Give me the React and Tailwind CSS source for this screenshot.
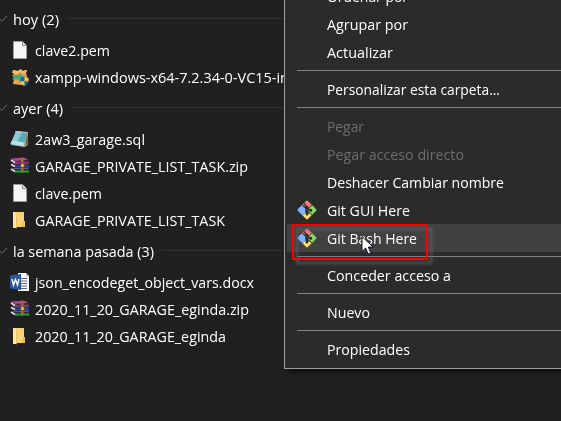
import { useLayoutEffect, useRef } from "react";

// Text squeezed horizontally to a given width.
function Label({ children, width }) {
  const ref = useRef(null);
  useLayoutEffect(() => {
    const el = ref.current;
    el.style.transform = "none";
    const natural = el.getBoundingClientRect().width;
    if (natural) el.style.transform = `scaleX(${width / natural})`;
  }, [width, children]);
  return (
    <span ref={ref} className="inline-block origin-left whitespace-pre">
      {children}
    </span>
  );
}

function FileIcon() {
  return (
    <svg width="20" height="20" viewBox="0 0 20 20">
      <path d="M3.5 1.5h9l4 4v13h-13z" fill="#f5f7f7" stroke="#9b9b9b" />
      <path d="M12.5 1.5v4h4" fill="#e2e5e7" stroke="#8b8b8b" />
    </svg>
  );
}

function FolderIcon() {
  return (
    <svg width="20" height="20" viewBox="0 0 20 20">
      <path d="M3 2h11v9h1v6H6.500L6 18H3z" fill="#f7d377" />
      <path d="M13 11h2v6h-3v-4z" fill="#eabf5c" />
      <path d="M3 2l3.500 1.500V18.500L4 17.500l-1-1z" fill="#ffe7a0" />
      <path d="M6.500 4v14" stroke="#dfb354" strokeWidth=".7" />
    </svg>
  );
}

function SetupIcon() {
  return (
    <svg width="20" height="20" viewBox="0 0 20 20">
      <path d="M3 3l5 1 3-2 1 2 5-1-1 3 1 4v7l-6 1-8-1 1-5z" fill="#e9a74c" />
      <path d="M3 3l5 1 3-2 1 2 5-1-1 3-5-1-4 2-5-1z" fill="#f3bd6a" />
      <path d="M2 8h7V5.500l6 5-6 4.500v-2.500H2l1.500-2z" fill="#41aa80" />
      <path d="M14.500 9.500l4 1.500v3.500c0 2-2 3.500-4 4.500-2-1-4-2.500-4-4.500V11z" fill="#1c5fae" />
      <path d="M14.500 9.500l4 1.500v3.200h-4zM10.500 14.200h4V19c-2-1-4-2.500-4-4.500z" fill="#f6cb33" />
    </svg>
  );
}

function SqlIcon() {
  return (
    <svg width="20" height="20" viewBox="0 0 20 20">
      <path d="M6 2l12 1v13l-3 2-14-2z" fill="#a99f74" />
      <path d="M17 4l1.500 10-3 3.500z" fill="#6a6350" />
      <path d="M6 2.500l11 1-3.500 14L.5 15z" fill="#58a9bb" />
      <path d="M6 2.500l6 .5L6 16 .5 15z" fill="#8ecbd6" />
      <path d="M2 11.500l12.500 2-1 4L.5 15z" fill="#b9e0e6" />
      <path d="M5.500 2.500l11 1" stroke="#eef4ed" strokeDasharray="1 1" />
    </svg>
  );
}

function ZipIcon() {
  return (
    <svg width="20" height="20" viewBox="0 0 20 20">
      <path d="M0 3l4-1 11-.5 4.500 3V17L5 17.500l-4-3z" fill="#29202b" />
      <path d="M1 2.500l13-1 4.500 2.500L5 5z" fill="#b04590" />
      <path d="M5 5.500h14V7H5z" fill="#8e2b75" />
      <path d="M5 9.500h14v2H5z" fill="#2b3fe0" />
      <path d="M5 14.500h14v2H5z" fill="#12a82c" />
      <path d="M3 7.800h15.500M3 12.700h15.500" stroke="#6f6b74" />
      <path d="M1 4l4 2.500M1 8.500l4 2M1 13l4 2.500" stroke="#e9dfe8" strokeWidth="1.500" />
      <path d="M11 1.500l2.500.5v14.500H11z" fill="#9a6d2b" />
      <path d="M10.500 7.500h4v4h-4z" fill="#c99b4b" stroke="#5c3d14" strokeWidth=".7" />
      <path d="M12.500 8.500v2" stroke="#f3e3ae" />
    </svg>
  );
}

function WordIcon() {
  return (
    <svg width="20" height="20" viewBox="0 0 20 20">
      <path d="M8 1h8l3 3v15H8z" fill="#fff" />
      <path d="M16 1v3h3z" fill="#a9b4c2" />
      <path d="M11 6.500h6M11 9h6M11 11.500h6M11 14h6M11 16.500h6" stroke="#58697f" />
      <path d="M0 3.500L11 2v16L0 16.500z" fill="#2b579a" />
      <path d="M2 7l1.500 6L5.500 7.500 7.500 13 9 7" stroke="#fff" strokeWidth="1.400" fill="none" />
    </svg>
  );
}

function GitIcon() {
  return (
    <svg width="20" height="20" viewBox="0 0 20 20">
      <path d="M10 0L20 10 10 20 0 10z" fill="#3a3432" />
      <path d="M5.200 4.700L9.200.9q.8-.7 1.600 0l4 3.900L11.500 8 8.700 6.800z" fill="#f47b78" />
      <path d="M4.700 5.200L8.300 8.800v4.400L5 15 .8 10.800q-.7-.8 0-1.600z" fill="#80b3ff" />
      <path d="M15.300 5.200l3.900 4q.7.800 0 1.600l-4 4L11.700 11.500V8.700z" fill="#87d762" />
      <path d="M5.300 15.200L8.500 13h3l3.200 2.200-3.900 3.900q-.8.700-1.600 0z" fill="#ffe169" />
      <g stroke="#302c2a" strokeWidth="1.200" fill="#302c2a">
        <path d="M7 3.500l3 3.500v7M10 7.500l3.500 3" fill="none" />
        <circle cx="10" cy="7.300" r=".9" />
        <circle cx="13.700" cy="10.300" r=".9" />
        <circle cx="10" cy="14" r=".9" />
      </g>
    </svg>
  );
}

const groups = [
  {
    name: "hoy (2)", width: 46,
    files: [
      { icon: FileIcon, name: "clave2.pem", width: 75 },
      { icon: SetupIcon, name: "xampp-windows-x64-7.2.34-0-VC15-in", width: 254 },
    ],
  },
  {
    name: "ayer (4)", width: 50,
    files: [
      { icon: SqlIcon, name: "2aw3_garage.sql", width: 110 },
      { icon: ZipIcon, name: "GARAGE_PRIVATE_LIST_TASK.zip", width: 213 },
      { icon: FileIcon, name: "clave.pem", width: 67 },
      { icon: FolderIcon, name: "GARAGE_PRIVATE_LIST_TASK", width: 190 },
    ],
  },
  {
    name: "la semana pasada (3)", width: 141,
    files: [
      { icon: WordIcon, name: "json_encodeget_object_vars.docx", width: 219 },
      { icon: ZipIcon, name: "2020_11_20_GARAGE_eginda.zip", width: 214 },
      { icon: FolderIcon, name: "2020_11_20_GARAGE_eginda", width: 191 },
    ],
  },
];

const menu = [
  { name: "Ordenar por", width: 81 },
  { name: "Agrupar por", width: 81 },
  { name: "Actualizar", width: 66 },
  null,
  { name: "Personalizar esta carpeta...", width: 173 },
  null,
  { name: "Pegar", width: 37 },
  { name: "Pegar acceso directo", width: 137 },
  { name: "Deshacer Cambiar nombre", width: 177 },
  { name: "Git GUI Here", width: 83, icon: true },
  { name: "Git Bash Here", width: 90, icon: true, active: true },
  null,
  { name: "Conceder acceso a", width: 124 },
  null,
  { name: "Nuevo", width: 43 },
  null,
  { name: "Propiedades", width: 83 },
].map((m) => (m && m.name.startsWith("Pegar") ? { ...m, disabled: true } : m));

function Group({ group }) {
  return (
    <section>
      <div className="flex h-[35px] items-center">
        <svg width="8" height="8" viewBox="0 0 8 8" className="mr-[5px] shrink-0">
          <path d="M-1 3.500L1.800 6.300 7 1" fill="none" stroke="#6c6c6c" />
        </svg>
        <div className="shrink-0" style={{ width: group.width + 8 }}>
          <Label width={group.width}>{group.name}</Label>
        </div>
        <div className="h-px flex-1 bg-[#303030]" />
      </div>
      {group.files.map(({ icon: Icon, name, width }) => (
        <div key={name} className="flex h-[27px] items-center pl-[10px]">
          <div className="mr-[5px] shrink-0">
            <Icon />
          </div>
          <Label width={width}>{name}</Label>
        </div>
      ))}
    </section>
  );
}

export default function App() {
  return (
    <div className="relative h-[421px] w-[561px] overflow-hidden bg-[#202020] font-['Open_Sans',sans-serif] text-[15px] leading-5 text-white">
      <main className="w-[284px] overflow-hidden pt-px">
        {groups.map((g) => (
          <Group key={g.name} group={g} />
        ))}
      </main>

      <div className="absolute bottom-[52px] left-[284px] w-[300px] border-b border-l border-[#a0a0a0] bg-[#2b2b2b] pb-[5px] pl-0.5 shadow-[4px_4px_4px_rgba(0,0,0,0.5)]">
        {menu.map((item, i) =>
          item === null ? (
            <div key={i} className="flex h-[9px] items-center pl-[10px]">
              <div className="h-px flex-1 bg-[#808080]" />
            </div>
          ) : (
            <div
              key={i}
              className={`flex h-7 items-center pl-[10px] ${item.active ? "bg-[#414141]" : ""} ${item.disabled ? "text-[#6d6d6d]" : ""}`}
            >
              <div className="mr-[10px] w-5 shrink-0">{item.icon && <GitIcon />}</div>
              <Label width={item.width}>{item.name}</Label>
            </div>
          )
        )}
      </div>

      <div className="absolute left-[292px] top-[224px] h-9 w-[136px] border-2 border-[#fe0000] drop-shadow-[4px_4px_1.5px_rgba(105,105,105,0.75)]" />

      <svg className="absolute left-[361px] top-[235px]" width="14" height="21" viewBox="0 0 14 21">
        <path d="M1 1.500v15l3.600-3.400 2.500 5.800 2.700-1.200-2.500-5.600h4.900z" fill="#fff" stroke="#111326" />
      </svg>
    </div>
  );
}
